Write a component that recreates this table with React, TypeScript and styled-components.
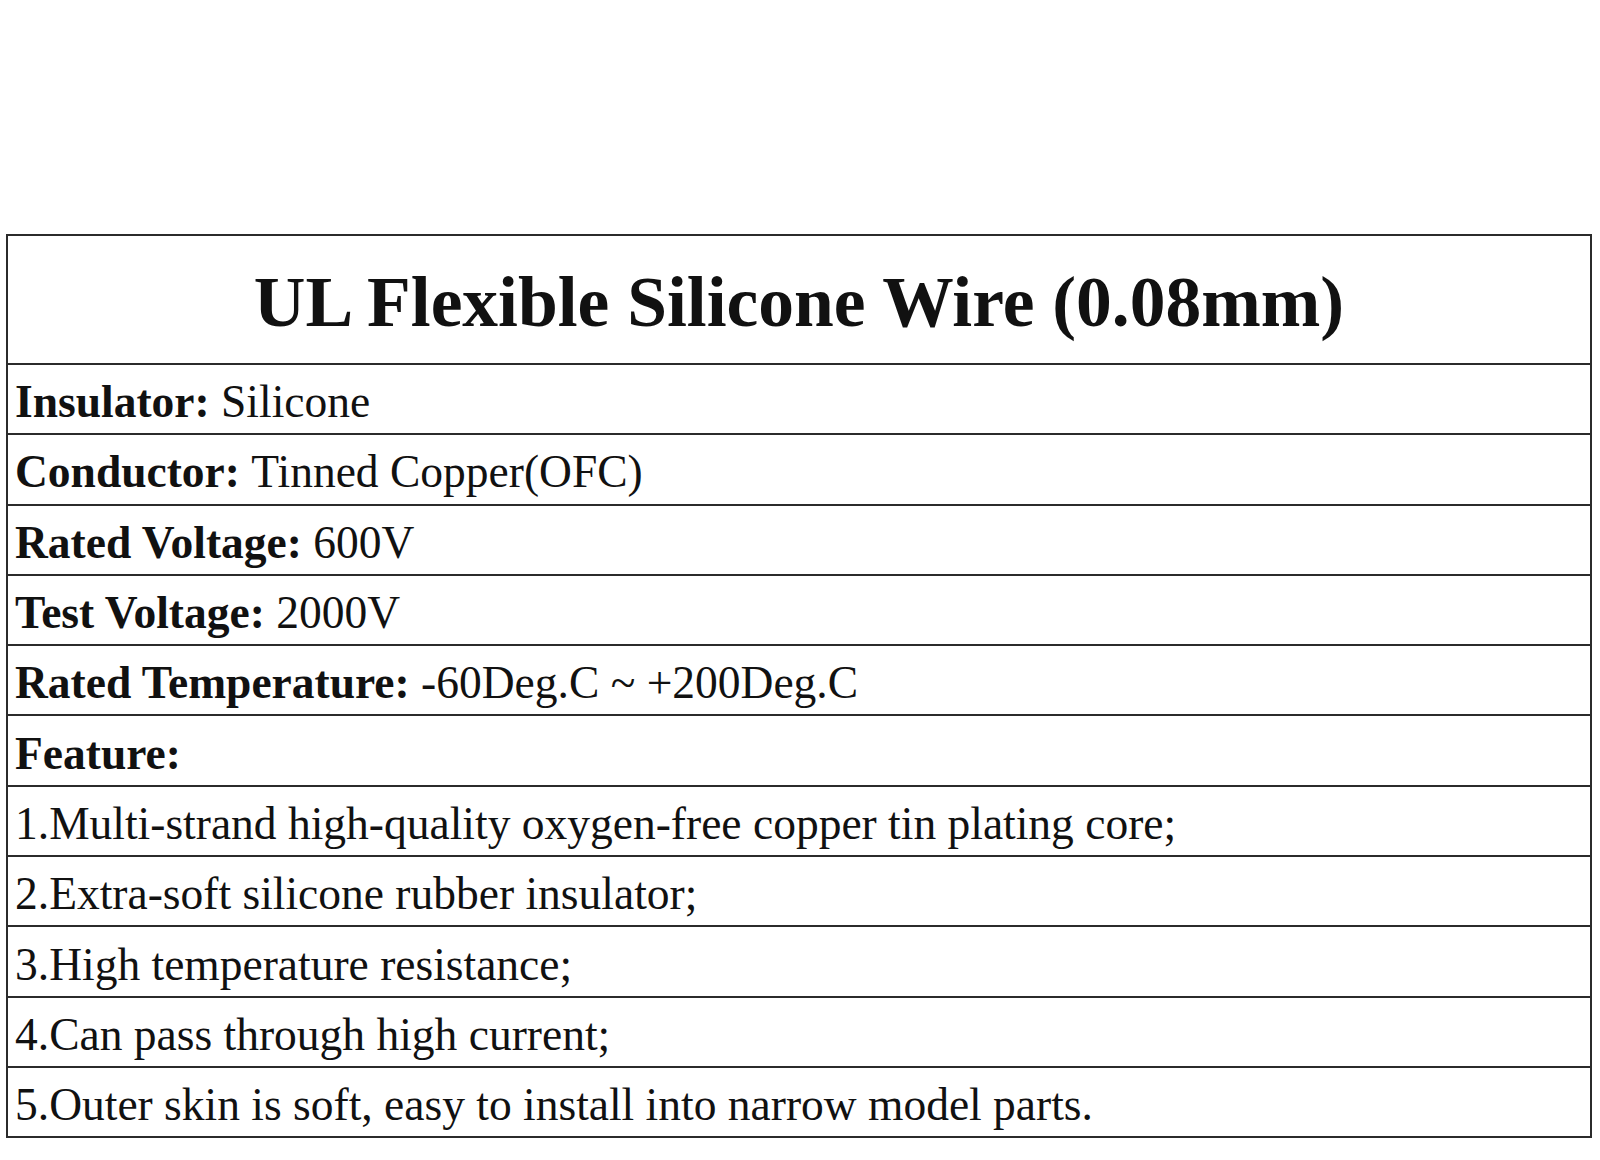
import React from "react";
import styled, { createGlobalStyle } from "styled-components";

const GlobalStyle = createGlobalStyle`
  html, body {
    margin: 0;
    padding: 0;
    background: #ffffff;
  }
  body {
    font-family: "Liberation Serif", "Times New Roman", serif;
    color: #111111;
  }
`;

const Page = styled.div`
  width: 1600px;
  height: 1160px;
  padding: 234px 0 0 6px;
  box-sizing: border-box;
  background: #ffffff;
`;

const Table = styled.div`
  width: 1586px;
  box-sizing: border-box;
  border: 2px solid #2b2b2b;
  display: flex;
  flex-direction: column;
`;

const TitleRow = styled.div`
  height: 129px;
  box-sizing: border-box;
  border-bottom: 2px solid #2b2b2b;
  display: flex;
  align-items: center;
  justify-content: center;
  font-size: 71.5px;
  font-weight: 700;
  padding-top: 5px;
`;

const Row = styled.div`
  height: 70.3px;
  box-sizing: border-box;
  border-bottom: 2px solid #2b2b2b;
  display: flex;
  align-items: center;
  padding: 5px 0 0 7px;
  font-size: 45.5px;
  white-space: nowrap;

  &:last-child {
    border-bottom: none;
    height: 68.3px;
  }
`;

const Label = styled.b`
  font-weight: 700;
`;

const specs: [string, string][] = [
  ["Insulator:", "Silicone"],
  ["Conductor:", "Tinned Copper(OFC)"],
  ["Rated Voltage:", "600V"],
  ["Test Voltage:", "2000V"],
  ["Rated Temperature:", "-60Deg.C ~ +200Deg.C"],
  ["Feature:", ""],
];

const features = [
  "1.Multi-strand high-quality oxygen-free copper tin plating core;",
  "2.Extra-soft silicone rubber insulator;",
  "3.High temperature resistance;",
  "4.Can pass through high current;",
  "5.Outer skin is soft, easy to install into narrow model parts.",
];

export default function App() {
  return (
    <>
      <GlobalStyle />
      <Page>
        <Table>
          <TitleRow>UL Flexible Silicone Wire (0.08mm)</TitleRow>
          {specs.map(([k, v]) => (
            <Row key={k}>
              <Label>{k}</Label>
              {v ? <span>&nbsp;{v}</span> : null}
            </Row>
          ))}
          {features.map((f) => (
            <Row key={f}>{f}</Row>
          ))}
        </Table>
      </Page>
    </>
  );
}
